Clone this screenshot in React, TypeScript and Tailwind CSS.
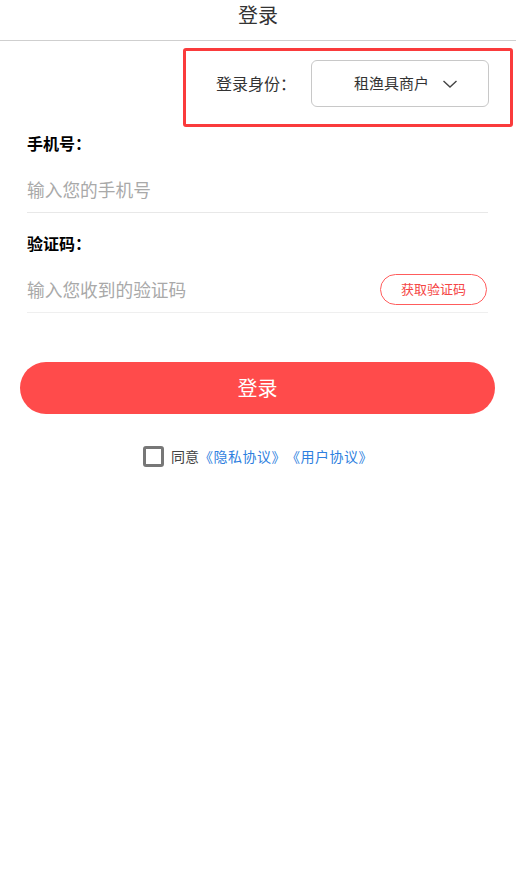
import React from "react";

export default function App() {
  return (
    <div
      className="w-[516px] h-[878px] bg-white text-[#333] [text-spacing-trim:space-all]"
      style={{ fontFamily: '"Noto Sans CJK SC", "Noto Sans", sans-serif' }}
    >
      <div className="h-[41px] border-b border-[#cfcfcf] flex justify-center">
        <span className="text-[20px] leading-[30px] text-[#333]">登录</span>
      </div>

      <div className="mt-[7px] ml-[183px] w-[330px] h-[79px] border-[3px] border-[#fa3b3c] rounded-[3px] flex items-start pl-[30px] pt-[9px]">
        <span className="text-[16px] leading-[47px] text-[#333] w-[95px]">登录身份：</span>
        <div className="w-[178px] h-[47px] border border-[#c8c8c8] rounded-[6px] flex items-center pl-[42px]">
          <span className="text-[15px] text-[#333]">租渔具商户</span>
          <svg className="ml-[13px]" width="16" height="10" viewBox="0 0 16 10">
            <path d="M1.5 2 L8 8 L14.5 2" fill="none" stroke="#444" strokeWidth="1.4" />
          </svg>
        </div>
      </div>

      <div className="px-[27px] w-[515px]">
        <div className="mt-[4px] h-[24px] leading-[24px] text-[16px] font-bold text-black">手机号：</div>
        <div className="mt-[11px] h-[47px] border-b border-[#e8e8e8] flex items-center">
          <span className="text-[17.7px] text-[#a9a9a9]">输入您的手机号</span>
        </div>

        <div className="mt-[18px] h-[24px] leading-[24px] text-[16px] font-bold text-black">验证码：</div>
        <div className="mt-[11px] h-[47px] border-b border-[#efefef] flex items-center justify-between">
          <span className="text-[17.7px] text-[#a9a9a9]">输入您收到的验证码</span>
          <div className="w-[107px] h-[31px] mr-[1px] border border-[#ff5c5c] rounded-full flex items-center justify-center text-[13px] text-[#f54545]">
            获取验证码
          </div>
        </div>
      </div>

      <div className="mt-[49px] ml-[20px] w-[475px] h-[52px] rounded-full bg-[#ff4b4b] flex items-center justify-center text-white text-[20px]">
        登录
      </div>

      <div className="mt-[32px] flex items-center justify-center">
        <div className="w-[21px] h-[21px] border-[3px] border-[#777] rounded-[3px]" />
        <span className="ml-[7px] text-[14px] text-[#444]">同意</span>
        <span className="text-[14px] text-[#2f7fe0] tracking-[0.5px]">《隐私协议》《用户协议》</span>
      </div>
    </div>
  );
}
